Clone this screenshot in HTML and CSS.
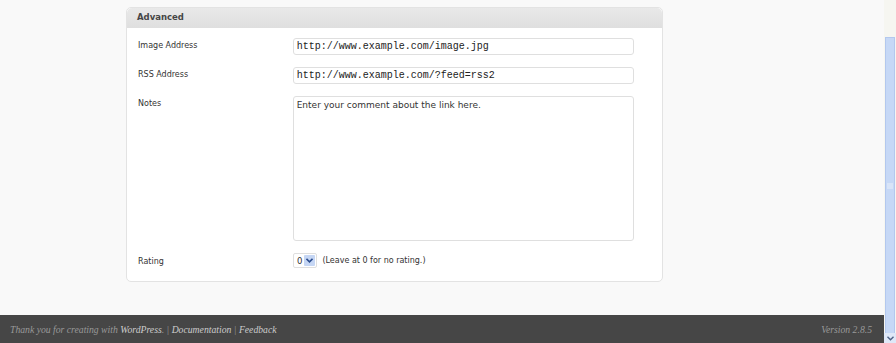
FILE: index.html
```html
<!DOCTYPE html>
<html lang="en">
<head>
    <meta charset="UTF-8">
    <title>Edit Link</title>
    <link rel="stylesheet" href="styles.css">
</head>
<body>
    <div class="window">
        <div class="page">
            <div class="content">
                <div class="postbox">
                    <h3 class="postbox-title">Advanced</h3>
                    <div class="postbox-inside">
                        <div class="form-row">
                            <label class="form-label">Image Address</label>
                            <input class="text-field" type="text" value="http://www.example.com/image.jpg">
                        </div>
                        <div class="form-row">
                            <label class="form-label">RSS Address</label>
                            <input class="text-field" type="text" value="http://www.example.com/?feed=rss2">
                        </div>
                        <div class="form-row notes-row">
                            <label class="form-label">Notes</label>
                            <textarea class="notes-field">Enter your comment about the link here.</textarea>
                        </div>
                        <div class="form-row rating-row">
                            <label class="form-label">Rating</label>
                            <div class="rating">
                                <span class="select-box">0<span class="select-arrow"><svg width="7" height="5" viewBox="0 0 7 5"><path d="M0.5 0.8 L3.5 3.8 L6.5 0.8" fill="none" stroke="#2b4d8f" stroke-width="1.6"/></svg></span></span>
                                <span class="rating-hint">(Leave at 0 for no rating.)</span>
                            </div>
                        </div>
                    </div>
                </div>
            </div>

            <!-- footer -->
            <div class="footer">
                <p class="footer-left">Thank you for creating with <a href="#">WordPress</a>. | <a href="#">Documentation</a> | <a href="#">Feedback</a></p>
                <p class="footer-right">Version 2.8.5</p>
            </div>
        </div>

        <div class="scrollbar">
            <div class="scroll-thumb"><span class="thumb-grip"></span></div>
            <div class="scroll-down"><svg width="7" height="5" viewBox="0 0 7 5"><path d="M0.5 0.8 L3.5 3.8 L6.5 0.8" fill="none" stroke="#4d6185" stroke-width="1.4"/></svg></div>
        </div>
    </div>
</body>
</html>
```

FILE: styles.css
```css
body {
    margin: 0;
    background: #f9f9f9;
    font-family: 'DejaVu Sans', Verdana, sans-serif;
    color: #333;
}
.window {
    display: flex;
    height: 343px;
    overflow: hidden;
}
.page {
    flex: 1;
    display: flex;
    flex-direction: column;
}
.content {
    flex: 1;
    padding: 7px 0 0 126px;
}
.postbox {
    width: 537px;
    height: 275px;
    background: #fff;
    border: 1px solid #e3e3e3;
    border-radius: 5px;
    box-sizing: border-box;
}
.postbox-title {
    margin: 0;
    height: 19px;
    line-height: 19px;
    padding-left: 10px;
    font-size: 8.5px;
    font-weight: bold;
    color: #464646;
    background: linear-gradient(#e9e9e9, #dfdfdf);
    border-bottom: 1px solid #dfdfdf;
    border-radius: 5px 5px 0 0;
}
.postbox-inside {
    padding: 10px 28px 0 11px;
}
.form-row {
    display: flex;
    align-items: flex-start;
    margin-bottom: 12px;
}
.form-label {
    width: 155px;
    font-size: 8px;
    color: #333;
    padding-top: 3px;
}
.text-field {
    width: 342px;
    height: 17px;
    box-sizing: border-box;
    border: 1px solid #dfdfdf;
    border-radius: 3px;
    padding: 0 3px;
    font-family: 'Liberation Mono', 'Courier New', monospace;
    font-size: 10px;
    color: #222;
    background: #fff;
}
.notes-row {
    margin-bottom: 12px;
}
.notes-field {
    width: 342px;
    height: 145px;
    box-sizing: border-box;
    border: 1px solid #dfdfdf;
    border-radius: 3px;
    padding: 3px;
    font-family: 'DejaVu Sans', Verdana, sans-serif;
    font-size: 9px;
    color: #333;
    resize: none;
}
.rating-row .form-label {
    padding-top: 4px;
}
.rating {
    display: flex;
    align-items: center;
    gap: 5px;
}
.select-box {
    display: flex;
    align-items: center;
    height: 15px;
    box-sizing: border-box;
    border: 1px solid #dfdfdf;
    border-radius: 2px;
    padding-left: 3px;
    font-size: 8.5px;
    color: #333;
    background: #fff;
}
.select-arrow {
    display: flex;
    align-items: center;
    justify-content: center;
    width: 11px;
    height: 11px;
    margin: 0 1px 0 2px;
    background: #c5d6f4;
    border-radius: 1px;
}
.rating-hint {
    font-size: 8px;
    color: #333;
}
.footer {
    height: 28px;
    background: #464646;
    display: flex;
    justify-content: space-between;
    align-items: center;
    padding: 0 12px 0 10px;
    font-family: Georgia, 'Liberation Serif', 'DejaVu Serif', serif;
    font-style: italic;
    font-size: 9.7px;
    color: #999;
}
.footer p {
    margin: 0;
}
.footer a {
    color: #ccc;
    text-decoration: none;
}
.scrollbar {
    width: 12px;
    background: #f6f6f1;
    display: flex;
    flex-direction: column;
    padding-top: 37px;
    box-sizing: border-box;
}
.scroll-thumb {
    flex: 1;
    margin: 0 1px 0 1px;
    background: #c6d8f6;
    border: 1px solid #b3c8ee;
    border-bottom: none;
    display: flex;
    align-items: center;
    justify-content: center;
}
.thumb-grip {
    width: 6px;
    height: 6px;
    background: #d8e4f8;
}
.scroll-down {
    height: 10px;
    display: flex;
    align-items: center;
    justify-content: center;
    background: #dfe8f8;
}
```
